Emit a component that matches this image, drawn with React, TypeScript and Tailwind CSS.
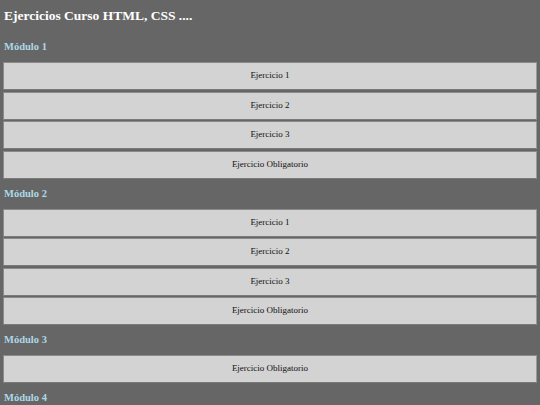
type Modulo = {
  titulo: string;
  ejercicios: string[];
};

const modulos: Modulo[] = [
  {
    titulo: "Módulo 1",
    ejercicios: ["Ejercicio 1", "Ejercicio 2", "Ejercicio 3", "Ejercicio Obligatorio"],
  },
  {
    titulo: "Módulo 2",
    ejercicios: ["Ejercicio 1", "Ejercicio 2", "Ejercicio 3", "Ejercicio Obligatorio"],
  },
  {
    titulo: "Módulo 3",
    ejercicios: ["Ejercicio Obligatorio"],
  },
  {
    titulo: "Módulo 4",
    ejercicios: [],
  },
];

export default function App() {
  return (
    <div className="min-h-screen overflow-hidden bg-[#666666] px-[3px] font-['Liberation_Serif',serif]">
      <h1 className="flex h-[32px] items-center pl-[1px] text-[13.5px] font-bold leading-none text-white">
        Ejercicios Curso HTML, CSS ....
      </h1>

      {modulos.map((modulo) => (
        <section key={modulo.titulo}>
          <h2 className="flex h-[30px] items-center pl-[1px] pt-[1px] text-[10.5px] font-bold leading-none text-[#add8e6]">
            {modulo.titulo}
          </h2>
          <div className="flex flex-col gap-[1.5px]">
            {modulo.ejercicios.map((ejercicio, i) => (
              <button
                key={i}
                type="button"
                className="flex h-[28px] w-full items-center justify-center border border-r-[#9a9a9a] border-l-[#8a8a8a] border-t-[#8a8a8a] border-b-[#7a7a7a] bg-[#d3d3d3] text-[9px] text-[#111111]"
              >
                {ejercicio}
              </button>
            ))}
          </div>
        </section>
      ))}
    </div>
  );
}
